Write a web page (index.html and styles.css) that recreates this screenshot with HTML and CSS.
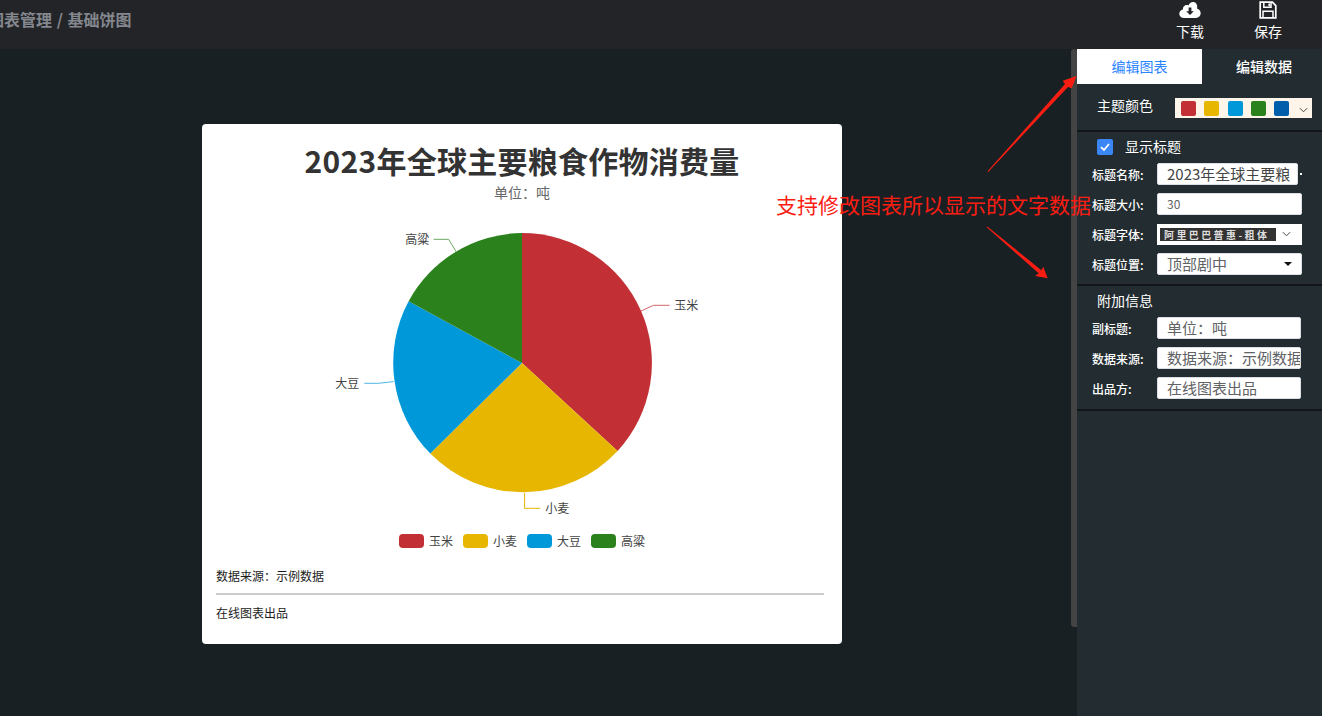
FILE: index.html
```html
<!DOCTYPE html>
<html lang="zh">
<head>
<meta charset="utf-8">
<title>基础饼图</title>
<link rel="stylesheet" href="styles.css">
</head>
<body>
<div class="app">
  <header class="topbar">
    <div class="crumb">图表管理 / 基础饼图</div>
    <div class="actions">
      <div class="action">
        <svg class="action-icon" viewBox="0 0 22 18"><path fill="#fff" fill-rule="evenodd" d="M5 17C2.2 17 0.3 15.2 0.3 12.8 0.3 10.7 1.8 9 3.9 8.6 3.9 8.4 3.9 8.2 3.9 8 3.9 5.8 5.7 4.1 7.8 4.1 8.4 4.1 9 4.2 9.5 4.5 10.4 2 12.4 0.6 14.6 1 17 1.4 18.4 3.4 18.2 6 18.2 6.4 18.1 6.9 18 7.4 20.2 7.9 21.7 9.9 21.7 12.3 21.7 15 19.7 17 17 17Z M9.6 6.5V10.2H7.2L11 14 14.8 10.2H12.4V6.5Z"/></svg>
        <span>下载</span>
      </div>
      <div class="action">
        <svg class="action-icon" viewBox="0 0 18 18"><path fill="none" stroke="#fff" stroke-width="1.7" d="M1.2 1.2H13.4L16.8 4.6V16.8H1.2Z"/><path fill="none" stroke="#fff" stroke-width="1.5" d="M4.8 1.4V6.2H12V1.4M4 16.6V10.2H14V16.6"/><path fill="#fff" d="M9.4 2.4H11V5.2H9.4Z"/></svg>
        <span>保存</span>
      </div>
    </div>
  </header>

  <main class="workspace">
    <section class="stage">
      <div class="card">
        <h1 class="chart-title">2023年全球主要粮食作物消费量</h1>
        <div class="chart-sub">单位：吨</div>
        <svg class="pie" viewBox="201.7 204.7 640 320">
          <path fill="#c23035" d="M521.7 362.7V232.7A130 130 0 0 1 617.3 450.7Z"/>
          <path fill="#e6b600" d="M521.7 362.7L617.3 450.7A130 130 0 0 1 430 453.3Z"/>
          <path fill="#0098d9" d="M521.7 362.7L430 453.3A130 130 0 0 1 408.3 301Z"/>
          <path fill="#2b821d" d="M521.7 362.7L408.3 301A130 130 0 0 1 521.7 232.7Z"/>
          <path class="lead lead-red" d="M640.7 310.7L653.3 305H669.3"/>
          <path class="lead lead-yellow" d="M524.3 492.7V508H540"/>
          <path class="lead lead-blue" d="M393.3 381.3L378.3 383H364"/>
          <path class="lead lead-green" d="M456 251.7L448.3 239H433.3"/>
          <text class="pie-label" x="674" y="310">玉米</text>
          <text class="pie-label" x="545" y="513">小麦</text>
          <text class="pie-label" x="335" y="388">大豆</text>
          <text class="pie-label" x="405" y="244">高粱</text>
        </svg>
        <div class="legend">
          <div class="legend-item"><i class="key key-red"></i>玉米</div>
          <div class="legend-item"><i class="key key-yellow"></i>小麦</div>
          <div class="legend-item"><i class="key key-blue"></i>大豆</div>
          <div class="legend-item"><i class="key key-green"></i>高粱</div>
        </div>
        <div class="source">数据来源：示例数据</div>
        <div class="maker">在线图表出品</div>
      </div>
    </section>

    <div class="scrollbar"><div class="thumb"></div></div>

    <aside class="panel">
      <div class="tabs">
        <div class="tab tab-on">编辑图表</div>
        <div class="tab">编辑数据</div>
      </div>

      <div class="group group-theme">
        <div class="group-name">主题颜色</div>
        <div class="theme-select">
          <i class="swatch key-red"></i>
          <i class="swatch key-yellow"></i>
          <i class="swatch key-blue"></i>
          <i class="swatch key-green"></i>
          <i class="swatch key-navy"></i>
          <svg class="chev" viewBox="0 0 10 6"><path d="M1 1L5 5L9 1"/></svg>
        </div>
      </div>

      <div class="group group-title">
        <div class="check-row">
          <span class="checkbox"><svg viewBox="0 0 16 16"><path d="M4 8.2L7 11L12 5"/></svg></span>
          <span class="group-name check-name">显示标题</span>
        </div>
        <div class="row">
          <label>标题名称:</label>
          <div class="field field-short">2023年全球主要粮</div>
          <i class="dot"></i>
        </div>
        <div class="row">
          <label>标题大小:</label>
          <div class="field field-num">30</div>
        </div>
        <div class="row">
          <label>标题字体:</label>
          <div class="font-select"><span class="font-chip">阿里巴巴普惠-粗体</span>
            <svg class="chev" viewBox="0 0 10 6"><path d="M1 1L5 5L9 1"/></svg>
          </div>
        </div>
        <div class="row">
          <label>标题位置:</label>
          <div class="field field-select">顶部剧中<i class="caret"></i></div>
        </div>
      </div>

      <div class="group group-extra">
        <div class="group-name extra-name">附加信息</div>
        <div class="row">
          <label>副标题:</label>
          <div class="field field-wide">单位：吨</div>
        </div>
        <div class="row">
          <label>数据来源:</label>
          <div class="field field-wide">数据来源：示例数据</div>
        </div>
        <div class="row">
          <label>出品方:</label>
          <div class="field field-wide">在线图表出品</div>
        </div>
      </div>
    </aside>
  </main>

  <svg class="arrows" viewBox="0 0 1322 716">
    <polygon points="987.4,171.4 1065,84.1 1062.7,80.7 1076.5,76 1071.7,88.3 1068,86.9 988.2,172"/>
    <polygon points="986.7,227.2 1038.7,273.3 1035,276 1047.7,278.3 1043.3,266.7 1041.3,270.3 987.3,226.4"/>
  </svg>
  <div class="note">支持修改图表所以显示的文字数据</div>
</div>
</body>
</html>
```

FILE: styles.css
```css
* { box-sizing: border-box; }
html, body { margin: 0; height: 100%; overflow: hidden; }
body {
  font-family: "Noto Sans CJK SC", "Liberation Sans", sans-serif;
  background: #182024;
}
.app { position: relative; width: 1322px; height: 716px; display: flex; flex-direction: column; overflow: hidden; }

.topbar {
  height: 49px;
  flex: none;
  background: #232428;
  display: flex;
  align-items: flex-start;
  justify-content: space-between;
}
.crumb {
  margin: 7px 0 0 -12px;
  font-size: 16px;
  line-height: 24px;
  font-weight: 700;
  word-spacing: 1px;
  color: #83878e;
  white-space: nowrap;
}
.actions { display: flex; gap: 50px; margin-right: 40px; }
.action { width: 28px; display: flex; flex-direction: column; align-items: center; color: #fff; font-size: 14px; line-height: 20px; }
.action-icon { width: 22px; height: 18px; margin-top: 1px; margin-bottom: 2px; display: block; }

.workspace { flex: 1; display: flex; min-height: 0; }
.stage { flex: 1; padding: 75px 0 0 202px; }
.card {
  width: 640px;
  height: 520px;
  background: #fff;
  border-radius: 4px;
  padding-top: 14px;
  display: flex;
  flex-direction: column;
}
.chart-title {
  margin: 0;
  height: 46px;
  font-size: 30px;
  line-height: 44px;
  font-weight: 700;
  letter-spacing: 0.25px;
  color: #333;
  text-align: center;
}
.chart-sub { height: 16px; font-size: 14px; line-height: 16px; color: #666; text-align: center; }
.pie { display: block; width: 640px; height: 320px; margin-top: 5px; flex: none; }
.lead { fill: none; stroke-width: 1; }
.lead-red { stroke: #d2666a; }
.lead-yellow { stroke: #e6b600; }
.lead-blue { stroke: #4db6e4; }
.lead-green { stroke: #6ba861; }
.pie-label { font-size: 12px; fill: #444; }
.legend { display: flex; justify-content: center; gap: 10px; margin-top: 8px; height: 16px; }
.legend-item { display: flex; gap: 5px; font-size: 12px; line-height: 16px; color: #444; }
.key { display: block; }
.legend-item .key { width: 25px; height: 14px; border-radius: 4px; margin-top: 1px; }
.key-red { background: #c23035; }
.key-yellow { background: #e6b600; }
.key-blue { background: #0098d9; }
.key-green { background: #2b821d; }
.key-navy { background: #005eaa; }
.source {
  margin: 19px 18px 0 14px;
  font-size: 12px;
  line-height: 16px;
  height: 27px;
  color: #1c1c1c;
  border-bottom: 2px solid #ccc;
}
.maker { margin: 10px 0 0 14px; font-size: 12px; line-height: 16px; color: #1c1c1c; }

.scrollbar { width: 6px; flex: none; background: transparent; }
.thumb { height: 578px; background: #444; border-radius: 3px 3px 0 3px; }

.panel { width: 245px; flex: none; background: #222c31; color: #fff; }
.tabs { display: flex; height: 35px; }
.tab { width: 125px; font-size: 14px; line-height: 35px; font-weight: 500; text-align: center; color: #fff; }
.tab-on { background: #fff; color: #2b85ff; font-weight: 400; }
.tab + .tab { width: 120px; padding-left: 4px; }

.group { border-bottom: 2px solid #121618; }
.group-name { font-size: 14px; line-height: 20px; color: #fff; }
.group-theme { height: 48px; display: flex; padding: 11px 0 0 20px; }
.theme-select {
  width: 137px;
  height: 20px;
  margin: 3px 0 0 22px;
  background: #fdf5ea;
  display: flex;
  align-items: center;
  gap: 8.3px;
  padding-left: 6px;
}
.swatch { display: block; width: 15px; height: 15px; border-radius: 2px; }
.chev { width: 9px; height: 6px; fill: none; stroke: #444; stroke-width: 1.1; }
.theme-select .chev { margin-left: 2px; margin-top: 3px; }

.group-title { height: 154px; padding-top: 7px; }
.check-row { display: flex; align-items: center; height: 16px; padding-left: 20px; gap: 12px; margin-bottom: 8px; }
.check-name { margin-top: -2px; }
.checkbox { width: 16px; height: 16px; background: #3a86f5; border-radius: 2px; display: block; }
.checkbox svg { display: block; fill: none; stroke: #fff; stroke-width: 1.8; }

.row { display: flex; align-items: center; height: 22px; padding-left: 15px; margin-bottom: 8px; }
.row label { width: 65px; flex: none; font-size: 12px; color: #fff; font-weight: 500; white-space: nowrap; }
.field {
  height: 22px;
  background: #fff;
  border: 1px solid #dcdfe6;
  border-radius: 2px;
  padding-left: 9px;
  font-size: 15px;
  line-height: 19px;
  color: #606266;
  white-space: nowrap;
  overflow: hidden;
}
.field-short { width: 141px; color: #444; }
.field-num { width: 145px; font-size: 12px; }
.field-select { width: 145px; display: flex; justify-content: space-between; align-items: center; padding: 0 9px 2px 9px; }
.field-wide { width: 144px; padding-right: 1px; }
.dot { width: 2px; height: 2px; background: #fff; margin-left: 2px; }
.caret { width: 0; height: 0; border: 4px solid transparent; border-top: 4px solid #111; border-bottom: 0; margin-top: 2px; }
.font-select {
  width: 145px;
  height: 21px;
  background: #fff;
  display: flex;
  align-items: center;
  padding-left: 3px;
  gap: 6px;
}
.font-chip {
  width: 116px;
  height: 13px;
  background: #333;
  color: #ddd;
  font-size: 10px;
  font-weight: 700;
  line-height: 13px;
  letter-spacing: 2.4px;
  padding-left: 4px;
  white-space: nowrap;
  overflow: hidden;
}
.font-select .chev { width: 9px; }

.group-extra { height: 125px; padding-top: 4px; }
.extra-name { padding-left: 20px; margin-bottom: 7px; }

.arrows { position: absolute; left: 0; top: 0; width: 1322px; height: 716px; pointer-events: none; fill: #fb1d12; }
.note {
  position: absolute;
  left: 776px;
  top: 188px;
  font-size: 21px;
  line-height: 32px;
  color: #fb1d12;
  white-space: nowrap;
}
```
